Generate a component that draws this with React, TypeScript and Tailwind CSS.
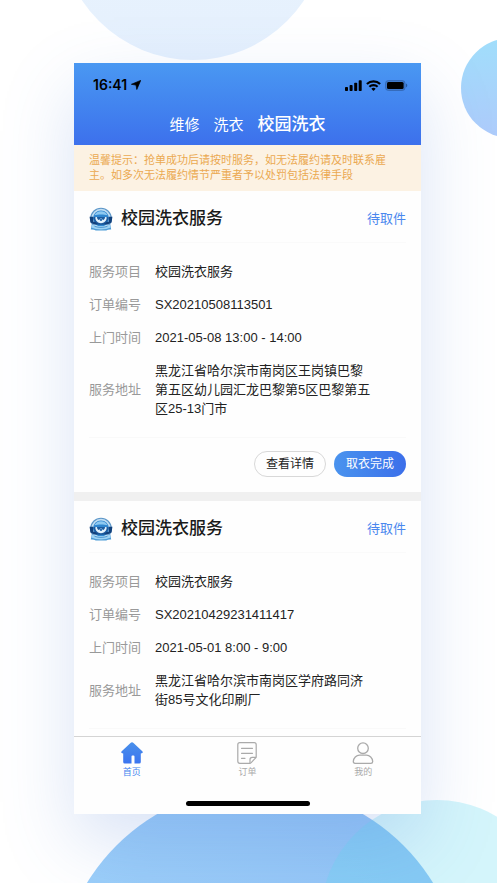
import clsx from 'clsx'

type Order = {
  id: string
  service: string
  status: string
  time: string
  address: string
  actions?: boolean
}

const TABS = ['维修', '洗衣', '校园洗衣']

const ORDERS: Order[] = [
  {
    id: 'SX20210508113501',
    service: '校园洗衣服务',
    status: '待取件',
    time: '2021-05-08 13:00 - 14:00',
    address: '黑龙江省哈尔滨市南岗区王岗镇巴黎第五区幼儿园汇龙巴黎第5区巴黎第五区25-13门市',
    actions: true,
  },
  {
    id: 'SX20210429231411417',
    service: '校园洗衣服务',
    status: '待取件',
    time: '2021-05-01 8:00 - 9:00',
    address: '黑龙江省哈尔滨市南岗区学府路同济街85号文化印刷厂',
  },
]

function StatusBar() {
  return (
    <div className="flex h-11 items-center justify-between pl-[19px] pr-[13px] text-black">
      <div className="flex items-center gap-1">
        <span className="font-['Inter',sans-serif] text-sm font-semibold">16:41</span>
        <svg viewBox="0 0 10 10" className="size-2.5" fill="currentColor">
          <path d="M9.7.4 5.8 9.5 5 5.100.4 4.300z" stroke="currentColor" strokeWidth=".7" strokeLinejoin="round" />
        </svg>
      </div>
      <div className="flex items-center gap-1">
        <svg viewBox="0 0 17 11" className="h-[11px] w-[17px]" fill="currentColor">
          <rect x="0" y="7" width="3" height="4" rx=".8" />
          <rect x="4.6" y="5" width="3" height="6" rx=".8" />
          <rect x="9.2" y="2.7" width="3" height="8.3" rx=".8" />
          <rect x="13.7" y=".3" width="3" height="10.7" rx=".8" />
        </svg>
        <svg viewBox="0 0 15 11" className="h-[11px] w-[15px]" fill="none" stroke="currentColor" strokeWidth="2.100">
          <path d="M.9 4.100a9.300 9.300 0 0 1 13.200 0" />
          <path d="M3.400 6.800a5.800 5.800 0 0 1 8.200 0" />
          <path d="M7.5 11 5.300 8.800a3.100 3.100 0 0 1 4.400 0z" fill="currentColor" stroke="none" />
        </svg>
        <svg viewBox="0 0 23 11" className="h-[11px] w-[23px]">
          <rect x=".5" y=".5" width="19.6" height="10" rx="3" fill="#3a6cb4" fillOpacity=".6" stroke="#2d5da5" strokeOpacity=".6" />
          <rect x="2" y="2" width="16.600" height="7" rx="1.500" />
          <path d="M21.200 3.600c1.400.6 1.400 3.200 0 3.800z" fill="#23508f" />
        </svg>
      </div>
    </div>
  )
}

function ServiceBadge() {
  return (
    <svg viewBox="0 0 24 24" className="size-6 shrink-0" aria-hidden="true">
      <path d="M3 16 1.800 22.500q3-.3 5 .9h10.400q2-1.200 5-.9L21 16z" fill="#4d9bd6" />
      <circle cx="12" cy="11.500" r="10.800" fill="#5c96c8" />
      <circle cx="12" cy="11.500" r="9.700" fill="#c3dff3" />
      <circle cx="12" cy="11.500" r="8" fill="#2f86cf" />
      <path d="M5.400 8.200a7.600 7.600 0 0 1 13.200 0c-3.400-1-9.800-1-13.200 0z" fill="#8ec9f1" />
      <path d="M.6 9.800h3.600v4.900h15.600V9.800h3.600l-.8 5.600-4 2.200H5.400l-4-2.200z" fill="#12427d" />
      <path d="M4.400 10h15.200c0 4.600-3.400 7.300-7.600 7.300S4.400 14.600 4.400 10z" fill="#1d5b9f" />
      <path d="M6.300 10.300c0 3.700 2.500 5.900 5.700 5.900s5.700-2.200 5.700-5.900l-1.700-.3c0 1.700-.8 2.800-2 3l-2-1.900-2 1.900c-1.200-.2-2-1.300-2-3z" fill="#e3f3fd" />
      <circle cx="12" cy="12.800" r="1.200" fill="#2a6db1" />
      <path d="M3.200 17.500c4.800 2.300 12.800 2.300 17.600 0l.8 3c-5.300 2.500-13.900 2.500-19.200 0z" fill="#9dd3f4" />
      <path d="M5.500 19.300c4 1.500 9 1.500 13 0" fill="none" stroke="#3d8ac9" strokeWidth=".8" />
    </svg>
  )
}

function Row({ label, children }: { label: string; children: string }) {
  return (
    <div className="flex items-center gap-[14px]">
      <dt className="w-[52px] shrink-0 text-[#999]">{label}</dt>
      <dd className="max-w-[218px] text-[#222]">{children}</dd>
    </div>
  )
}

function OrderCard({ order }: { order: Order }) {
  return (
    <article className="px-[15px]">
      <header className="flex h-[52px] items-center border-b border-[#fafafa] pt-1">
        <ServiceBadge />
        <h2 className="ml-2 flex-1 text-[17px] font-medium text-[#1a1a1a]">{order.service}</h2>
        <span className="text-[13px] text-[#4a87ee]">{order.status}</span>
      </header>
      <dl className="flex flex-col gap-[14px] border-b border-[#f9f9f9] py-[19px] text-[13px] leading-[19px]">
        <Row label="服务项目">{order.service}</Row>
        <Row label="订单编号">{order.id}</Row>
        <Row label="上门时间">{order.time}</Row>
        <Row label="服务地址">{order.address}</Row>
      </dl>
      {order.actions && (
        <div className="flex justify-end gap-2 pb-[15px] pt-[13px] text-xs">
          <button className="h-[26px] w-[72px] rounded-full border border-[#d8d8d8] text-[#222]">查看详情</button>
          <button className="h-[26px] w-[72px] rounded-full bg-linear-to-r from-[#4a93ee] to-[#3c6fea] text-white">取衣完成</button>
        </div>
      )}
    </article>
  )
}

function HomeIcon() {
  return (
    <svg viewBox="0 0 22 22" className="size-[22px]">
      <defs>
        <linearGradient id="home" x1="0" y1="0" x2="0" y2="1">
          <stop offset="0" stopColor="#4a90ea" />
          <stop offset="1" stopColor="#3b74f0" />
        </linearGradient>
      </defs>
      <path
        d="M9.500.9q1.500-1.200 3 0l8.800 8.400q.9 1 0 1.800-.5.400-1.500.400V20q0 1.600-1.600 1.600h-4.700V14.400q0-.9-.9-.9h-1.200q-.9 0-.9.9v7.200H3.800q-1.600 0-1.600-1.600v-8.500q-1 0-1.500-.4-.9-.8 0-1.800z"
        fill="url(#home)"
      />
    </svg>
  )
}

function OrderIcon() {
  return (
    <svg viewBox="0 0 22 22" className="size-[22px]" fill="none" stroke="currentColor" strokeWidth="1.200" strokeLinecap="round" strokeLinejoin="round">
      <path d="M13.500 21.300H3.800q-2 0-2-2V2.700q0-2 2-2h14.400q2 0 2 2v11.800q0 1-.8 1.700l-4.200 4.400q-.7.700-1.700.7z" />
      <path d="M14 21v-3.500q0-2.200 2.200-2.200h3.600" />
      <path d="M5.500 6.300h11M5.500 11.300h11M5.500 16.300h3.500" />
    </svg>
  )
}

function UserIcon() {
  return (
    <svg viewBox="0 0 22 22" className="size-[22px]" fill="none" stroke="currentColor" strokeWidth="1.300">
      <circle cx="11" cy="6.200" r="5.300" />
      <path d="M3 21.300q-1.700 0-1.700-1.700c0-4 3.200-6.400 6.300-6.400h6.800c3.100 0 6.300 2.400 6.300 6.400q0 1.700-1.700 1.700z" />
    </svg>
  )
}

const NAV = [
  { label: '首页', Icon: HomeIcon, active: true },
  { label: '订单', Icon: OrderIcon, active: false },
  { label: '我的', Icon: UserIcon, active: false },
]

export default function App() {
  return (
    <div className="relative overflow-hidden bg-white pb-[69px] pl-[74px] pr-[76px] pt-[63px] font-['Liberation_Sans','Noto_Sans_CJK_SC',sans-serif]">
      {/* background bubbles */}
      <div className="absolute -top-[206px] left-[60px] size-[266px] rounded-full bg-linear-to-b from-[#ecf6fe] to-[#e5f0fd]" />
      <div className="absolute left-[461px] top-[38px] size-[100px] rounded-full bg-linear-to-b from-[#a0defb] to-[#aecbfb]" />
      <div className="absolute left-[57px] top-[786px] size-[406px] rounded-full bg-linear-to-bl from-[#90c0f5] via-[#9accf8] to-[#a2dcff]" />
      <div className="absolute left-[321px] top-[800px] size-[232px] rounded-full bg-[#64daf2]/28" />

      <div className="relative bg-[#fefefe] shadow-[0_28px_68px_rgba(80,128,215,0.22)]">
        <header className="bg-linear-to-b from-[#4a98f2] to-[#3d70ec]">
          <StatusBar />
          <nav className="flex h-[38px] items-center justify-center gap-[14px] pb-0.5 text-[15px] text-white">
            {TABS.map((t) => (
              <button key={t} className={clsx(t === '校园洗衣' && 'text-[17px] font-medium')}>{t}</button>
            ))}
          </nav>
        </header>

        <p className="bg-[#fcf2e3] px-[15px] py-2 text-[11px] leading-[15px] text-[#eba951]">
          温馨提示：抢单成功后请按时服务，如无法履约请及时联系雇主。如多次无法履约情节严重者予以处罚包括法律手段
        </p>

        <main className="flex flex-col pb-[7px]">
          <OrderCard order={ORDERS[0]} />
          <div className="h-[9px] bg-[#f0f0f0]" />
          <OrderCard order={ORDERS[1]} />
        </main>

        <footer className="border-t border-[#d4d4d4] pb-2">
          <nav className="grid grid-cols-3 pt-[5px]">
            {NAV.map(({ label, Icon, active }) => (
              <a
                key={label}
                href="#"
                className={clsx('flex flex-col items-center text-[9px] leading-4', active ? 'text-[#4383ee]' : 'text-[#aaa]')}
              >
                <Icon />
                {label}
              </a>
            ))}
          </nav>
          <div className="mx-auto mt-[21px] h-[5px] w-[124px] rounded-full bg-black" />
        </footer>
      </div>
    </div>
  )
}
